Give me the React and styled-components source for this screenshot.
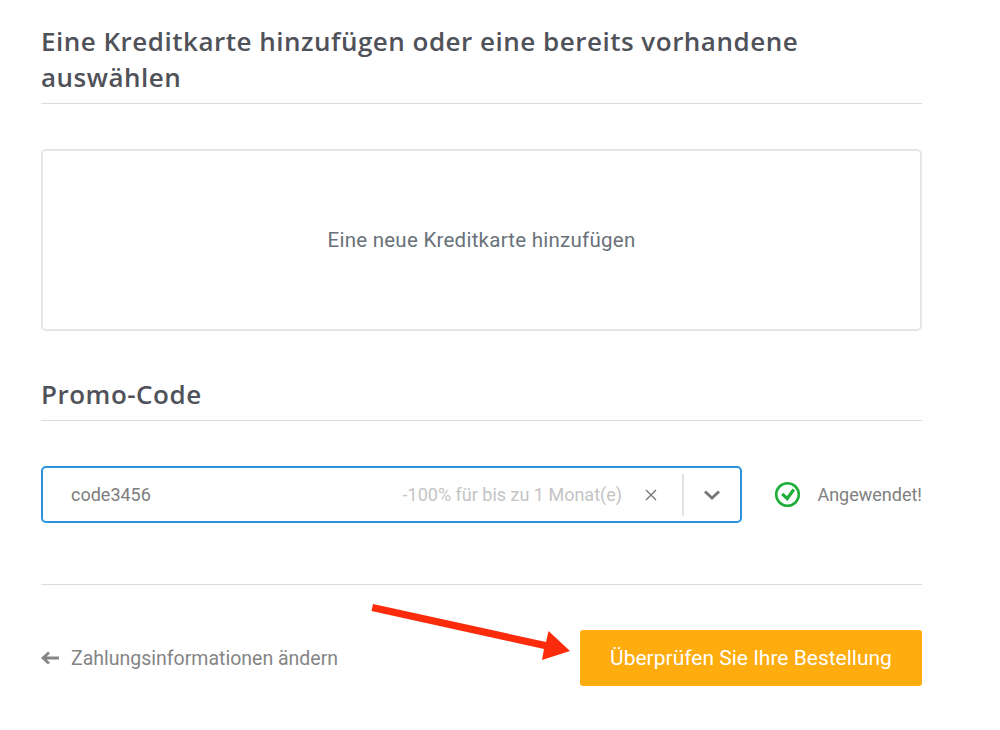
import React from 'react';
import styled, { createGlobalStyle } from 'styled-components';

const GlobalStyle = createGlobalStyle`
  html, body {
    margin: 0;
    padding: 0;
    background: #fff;
  }
  body {
    font-family: Roboto, "Liberation Sans", sans-serif;
  }
`;

const Page = styled.div`
  position: relative;
  width: 1000px;
  height: 730px;
  overflow: hidden;
  box-sizing: border-box;
  padding: 23px 78px 0 41px;
`;

const Heading = styled.h2`
  margin: 0;
  padding: 0 80px 8px 0;
  border-bottom: 1px solid #dcdcdc;
  font-family: "Open Sans", "Noto Sans", sans-serif;
  font-size: 26px;
  line-height: 36px;
  font-weight: 540;
  letter-spacing: 0.5px;
  color: #50525a;
`;

const AddCard = styled.div`
  box-sizing: border-box;
  height: 182px;
  margin-top: 45px;
  border: 2px solid #e6e6e6;
  border-radius: 5px;
  display: flex;
  align-items: center;
  justify-content: center;
  font-size: 20.5px;
  letter-spacing: 0.25px;
  color: #69727a;
`;

const PromoSection = styled.section`
  margin-top: 45px;
`;

const PromoRow = styled.div`
  display: flex;
  align-items: center;
  justify-content: space-between;
  margin-top: 45px;
`;

const PromoField = styled.div`
  box-sizing: border-box;
  width: 701px;
  height: 57px;
  display: flex;
  align-items: center;
  border: 2px solid #2b94e0;
  border-radius: 5px;
  padding-left: 28px;
`;

const PromoValue = styled.span`
  flex: 1;
  font-size: 18px;
  color: #7d7d7d;
`;

const PromoHint = styled.span`
  font-size: 18px;
  color: #c4c4c4;
`;

const ClearButton = styled.span`
  display: flex;
  margin-left: 22px;
  color: #777;
`;

const FieldDivider = styled.span`
  width: 2px;
  height: 42px;
  margin-left: 24px;
  background: #e2e2e2;
`;

const ChevronButton = styled.span`
  width: 56px;
  display: flex;
  justify-content: center;
  color: #777;
`;

const Status = styled.div`
  display: flex;
  align-items: center;
  gap: 16px;
  font-size: 18px;
  color: #7f7f7f;
`;

const Footer = styled.div`
  display: flex;
  align-items: center;
  justify-content: space-between;
  margin-top: 61px;
  padding-top: 45px;
  border-top: 1px solid #dcdcdc;
`;

const BackLink = styled.a`
  display: flex;
  align-items: center;
  gap: 12px;
  font-size: 19.5px;
  color: #858585;
`;

const SubmitButton = styled.button`
  width: 342px;
  height: 56px;
  padding: 0;
  border: none;
  border-radius: 3px;
  background: #feac0e;
  color: #fff;
  font-family: inherit;
  font-size: 21px;
`;

const Annotation = styled.svg`
  position: absolute;
  left: 0;
  top: 0;
  pointer-events: none;
`;

export default function App() {
  return (
    <Page>
      <GlobalStyle />
      <Heading>Eine Kreditkarte hinzufügen oder eine bereits vorhandene auswählen</Heading>
      <AddCard>Eine neue Kreditkarte hinzufügen</AddCard>
      <PromoSection>
        <Heading>Promo-Code</Heading>
        <PromoRow>
          <PromoField>
            <PromoValue>code3456</PromoValue>
            <PromoHint>-100% für bis zu 1 Monat(e)</PromoHint>
            <ClearButton>
              <svg width="14" height="14" viewBox="0 0 14 14" fill="none" stroke="currentColor" strokeWidth="1.4">
                <path d="M2 2l10 10M12 2L2 12" />
              </svg>
            </ClearButton>
            <FieldDivider />
            <ChevronButton>
              <svg width="16" height="10" viewBox="0 0 16 10" fill="none" stroke="currentColor" strokeWidth="2.8">
                <path d="M1 1.5l7 6.5 7-6.5" />
              </svg>
            </ChevronButton>
          </PromoField>
          <Status>
            <svg width="27" height="27" viewBox="0 0 27 27" fill="none" stroke="#1fae3a">
              <circle cx="13.5" cy="13.5" r="11.3" strokeWidth="2.6" />
              <path d="M8.2 12.8l5 4.7 6.6-9" strokeWidth="3.2" />
            </svg>
            Angewendet!
          </Status>
        </PromoRow>
      </PromoSection>
      <Footer>
        <BackLink>
          <svg width="18" height="14" viewBox="0 0 18 14" fill="none" stroke="currentColor" strokeWidth="2.8">
            <path d="M18 7H3M8 1.5L2 7l6 5.5" />
          </svg>
          Zahlungsinformationen ändern
        </BackLink>
        <SubmitButton>Überprüfen Sie Ihre Bestellung</SubmitButton>
      </Footer>
      <Annotation width="1000" height="730" viewBox="0 0 1000 730">
        <path d="M373 604L546 642L548.5 631L570 651L542 660L544 649L371.5 611Z" fill="#fb2b0b" />
      </Annotation>
    </Page>
  );
}
